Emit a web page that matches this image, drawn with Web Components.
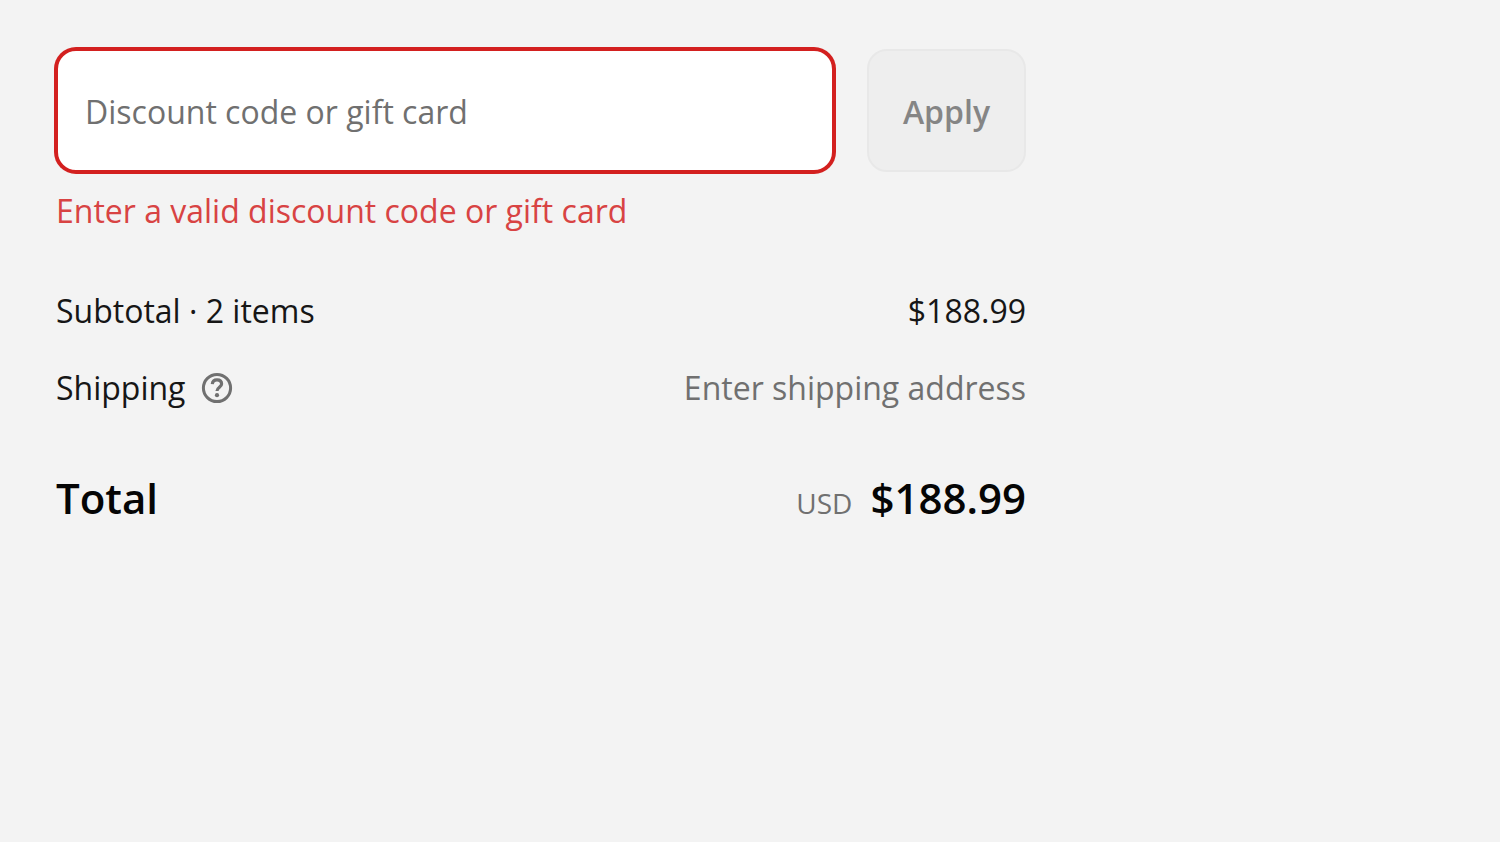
<!DOCTYPE html>
<html lang="en">
<head>
<meta charset="utf-8">
<meta name="viewport" content="width=device-width, initial-scale=1">
<title>Order summary</title>
<style>
	body{
		margin: 0;
		background: #f3f3f3;
		color: #161616;
		font-family: "Segoe UI", "Open Sans", "Noto Sans", sans-serif;
		font-size: 32px;
		line-height: 44px;
		--muted: #707070;
		--error: #d3201f;
	}
</style>
</head>
<body>
	<order-summary>
		<discount-form label="Discount code or gift card" action="Apply" error="Enter a valid discount code or gift card"></discount-form>
		<summary-row>
			<span slot="name">Subtotal · 2 items</span>
			$188.99
		</summary-row>
		<summary-row muted>
			<span slot="name">Shipping</span>
			<help-button slot="help" label="Shipping policy"></help-button>
			Enter shipping address
		</summary-row>
		<summary-total currency="USD" amount="$188.99">Total</summary-total>
	</order-summary>

<script>
class OrderSummary extends HTMLElement{
	connectedCallback(){
		if(this.shadowRoot) return
		this.attachShadow({ mode: "open" })
		this.shadowRoot.innerHTML = `
			<style>
			:host{
				display: block;
				box-sizing: border-box;
				max-width: 1082px;
				padding: 49px 56px;
			}
			main{
				display: flex;
				flex-direction: column;
				gap: 33px;
			}
			::slotted(discount-form){
				margin-bottom: 23px;
			}
			::slotted(summary-total){
				margin-top: 27px;
			}
			</style>
			<main><slot></slot></main>
		`
	}
}

class DiscountForm extends HTMLElement{
	connectedCallback(){
		if(this.shadowRoot) return
		const label = this.getAttribute('label')
		this.attachShadow({ mode: "open" })
		this.shadowRoot.innerHTML = `
			<style>
			:host{
				display: block;
			}
			form{
				display: grid;
				grid-template-columns: 1fr auto;
				column-gap: 33px;
				row-gap: 17px;
				margin: 0;
			}
			input, button{
				box-sizing: border-box;
				height: 123px;
				margin: 0;
				border-radius: 20px;
				font: inherit;
			}
			input{
				width: 100%;
				min-width: 0;
				padding: 2px 27px 0;
				border: 2px solid var(--error);
				box-shadow: 0 0 0 2px var(--error);
				background: #fff;
				color: inherit;
				outline: none;
			}
			input::placeholder{
				color: var(--muted);
				opacity: 1;
			}
			button{
				padding: 2px 34px 0;
				border: 2px solid #e8e8e8;
				background: #eeeeee;
				color: #858585;
				font-weight: 600;
			}
			p{
				grid-column: 1 / -1;
				margin: 0;
				color: #d84343;
			}
			</style>
			<form>
				<input type="text" name="discount" placeholder="${label}" aria-label="${label}" aria-invalid="true" aria-describedby="error">
				<button type="submit" disabled>${this.getAttribute('action')}</button>
				<p id="error">${this.getAttribute('error')}</p>
			</form>
		`
	}
}

class SummaryRow extends HTMLElement{
	connectedCallback(){
		if(this.shadowRoot) return
		this.attachShadow({ mode: "open" })
		this.shadowRoot.innerHTML = `
			<style>
			:host{
				display: flex;
				justify-content: space-between;
				gap: 16px;
			}
			.name{
				display: flex;
				align-items: center;
				gap: 16px;
			}
			.value{
				text-align: right;
			}
			:host([muted]) .value{
				color: var(--muted);
			}
			</style>
			<div class="name"><slot name="name"></slot><slot name="help"></slot></div>
			<div class="value"><slot></slot></div>
		`
	}
}

class HelpButton extends HTMLElement{
	connectedCallback(){
		if(this.shadowRoot) return
		this.attachShadow({ mode: "open" })
		this.shadowRoot.innerHTML = `
			<style>
			:host{
				display: block;
			}
			button{
				display: block;
				padding: 0;
				border: 0;
				background: none;
				color: var(--muted);
			}
			svg{
				display: block;
				width: 32px;
				height: 32px;
			}
			</style>
			<button type="button" aria-label="${this.getAttribute('label')}">
				<svg viewBox="0 0 32 32" fill="none" stroke="currentColor" aria-hidden="true">
					<circle cx="16" cy="16" r="13.6" stroke-width="3"/>
					<path d="M11.3 12.2C11.5 9.4 13.3 7.9 16 7.9C18.8 7.9 20.6 9.5 20.6 12C20.6 15.2 16 15.3 16 19" stroke-width="3.2"/>
					<circle cx="16" cy="23.2" r="2.1" fill="currentColor" stroke="none"/>
				</svg>
			</button>
		`
	}
}

class SummaryTotal extends HTMLElement{
	connectedCallback(){
		if(this.shadowRoot) return
		this.attachShadow({ mode: "open" })
		this.shadowRoot.innerHTML = `
			<style>
			:host{
				display: flex;
				justify-content: space-between;
				align-items: baseline;
				line-height: 56px;
				color: #050505;
			}
			strong{
				font-size: 42px;
				font-weight: 600;
			}
			.price{
				display: flex;
				align-items: baseline;
				gap: 18px;
			}
			.currency{
				font-size: 28px;
				color: var(--muted);
			}
			</style>
			<strong><slot></slot></strong>
			<div class="price">
				<span class="currency">${this.getAttribute('currency')}</span>
				<strong>${this.getAttribute('amount')}</strong>
			</div>
		`
	}
}

customElements.define("order-summary", OrderSummary)
customElements.define("discount-form", DiscountForm)
customElements.define("summary-row", SummaryRow)
customElements.define("help-button", HelpButton)
customElements.define("summary-total", SummaryTotal)
</script>
</body>
</html>
